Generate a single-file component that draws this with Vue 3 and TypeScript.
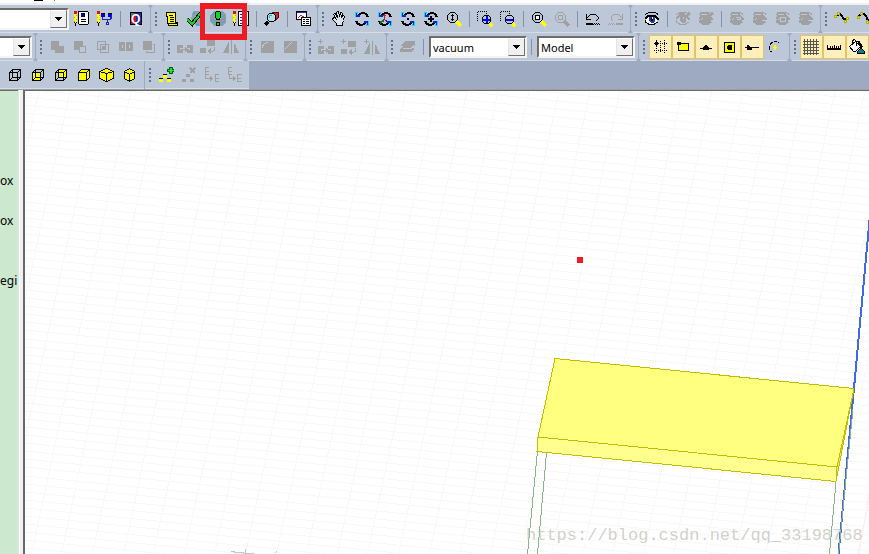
<script setup lang="ts">
type Item =
  | { kind: 'button'; icon: string; label: string; off?: boolean; on?: boolean }
  | { kind: 'sep' }
  | { kind: 'combo'; value: string; label: string; size: string }

interface Bar {
  items: Item[]
  grip: boolean
}

const fill = (color: string, d: string): string => `<path fill="${color}" d="${d}"/>`
const line = (color: string, d: string, w = 1): string =>
  `<path fill="none" stroke="${color}" stroke-width="${w}" d="${d}"/>`
const dots = (color: string, d: string): string =>
  `<path fill="none" stroke="${color}" stroke-dasharray="1 1" d="${d}"/>`
const both = (color: string, stroke: string, d: string): string =>
  `<path fill="${color}" stroke="${stroke}" d="${d}"/>`
const shift = (s: string, x: number, y: number): string => `<g transform="translate(${x} ${y})">${s}</g>`

const K = '#000'
const G = '#a0a0a0'
const Y = '#ff0'
const BG = '#bcc7d8'

const pencil =
  fill('#e01010', 'M0 0h3v3H0z') +
  fill(Y, 'M0 3h3v9H0z') +
  fill('#e0a000', 'M2 4h1v1H2zM0 6h1v1H0zM2 8h1v1H2zM0 10h1v1H0z') +
  fill(K, 'M1 12h1v3H1zM0 11h1v1H0zM2 11h1v1H2z')

const lens = (c: string, handle: string): string =>
  line(handle, 'M10.5 10.5l4.5 4.5', 3) + line(c, 'M4.5 1.5h4l3 3v4l-3 3h-4l-3-3v-4z')

const smallLens =
  line(Y, 'M12 12l3.5 3.5', 3) + line(K, 'M7.5 4.5h4l2 2v4l-2 2h-4l-2-2v-4z')

const orbit = (centre: string): string =>
  fill('#00e0f0', 'M1 1h3v2H3v3H1zM15 15h-3v-2h1v-3h2z') +
  line(K, 'M4 4q4-3 8-1l2 3M12 12q-4 3-8 1l-2-3', 2) +
  fill('#1020d0', 'M2 2h1v2h3v2H2zM14 14h-1v-2h-3v-2h4z') +
  centre

const eye = (c: string, iris: string, white: string, pupil: string): string =>
  fill(white, 'M2 8l3-3h6l3 3-1 3-4 2H5l-3-2z') +
  line(c, 'M1.5 3.5l3-2h6l3 1v1') +
  line(c, 'M1 8l3-3h7l4 4', 2) +
  line(c, 'M1.5 9v2l3 2h6l3-2') +
  fill(iris, 'M5 6h6v4l-2 2H7l-2-2z') +
  fill(pupil, 'M7 7h2v3H7z') +
  fill(white, 'M8 6h1v2H8z')

const greyEye = (extra: string): string => eye(G, G, G, G) + fill(G, 'M2 1h9v4H2z') + line(BG, 'M3 3.5h6M3 8.5l2-1') + extra

const slash = line(G, 'M9 7l6-5', 3)

const cubeEdges = line(K, 'M2.5 13.5v-8l3-3h8v8l-3 3zM2.5 5.5h8v8M10.5 5.5l3-3')
const cube = (front: string, rear: string): string =>
  (rear ? fill(rear, 'M5 2h9v8H5z') : '') +
  (front ? fill(front, 'M2 5h9v9H2z') : '') +
  line(K, 'M5.5 2v8h8M2.5 13.5l3-3') +
  cubeEdges

const plus = line(G, 'M2.5 0v5M0 2.5h5')
const move =
  fill(G, 'M0 6h6v8H0zM10 6h6v8h-6z') + fill(BG, 'M3 9h3v2H3zM10 9h3v2h-3z') +
  line(G, 'M4 10.5h8') + fill(G, 'M8 8l3 2v1l-3 2z')
const turn = fill(G, 'M0 9h6v5H0zM7 1h8v6H7z') + line(G, 'M14.5 8v3l-2 1.5H9') + fill(G, 'M7 12l4-3v6z')
const mirror = fill(G, 'M6 2v12H0z') + both(G, G, 'M11.5 5v8.5H15z') + line(G, 'M8.5 1v14')
const tree = (x: number, y: number): string => shift(line(G, 'M1.5 0v8M1 .5h4M1 4.5h4M1 7.5h4'), x, y)
const node = (x: number, y: number): string => shift(fill(K, 'M0 0h4v1H0z') + fill(Y, 'M0 1h4v3H0z'), x, y)

const icons: Record<string, string> = {
  notes:
    pencil +
    both('#fff', K, 'M4.5 .5h9l1 1v11l-1 1h-8l-1-1z') +
    fill('#0000c8', 'M7 2h4v4H7z') + fill(K, 'M7 2h4v1H7zM10 2h1v4h-1z') +
    line(K, 'M7 8.5h5M7 10.5h5'),
  schema:
    pencil +
    fill('#0000c8', 'M4 2h4v4H4zM11 2h4v4h-4z') + fill(K, 'M4 2h4v1H4zM11 2h4v1h-4z') +
    line('#1828b0', 'M5.5 6v2.5h8V6M10.5 8v4M14.5 4v4') + line('#1828b0', 'M9.5 11.5h2v2h-2z'),
  queue:
    both('#1828b0', K, 'M2.5 1.5h11v12h-11z') + fill('#c8142c', 'M3 2h5v11H3z') + fill('#109080', 'M3 2h2v3H3z') +
    '<text x="3" y="12" font-size="12" font-weight="bold" fill="#fff" font-family="Liberation Sans, sans-serif">Q</text>',
  script:
    both(Y, K, 'M2.5 1.5h9v10h2v3h-9v-2h-1v-7h-1z') +
    line(K, 'M5 4.5h4M6 6.5h4M6 8.5h4M6 10.5h4M5 12.5h8'),
  check:
    fill('#8fa0ae', 'M6 0h6l4 4v7l-3 4H9L4 8z') + fill('#30b8c0', 'M6 1h2v2H6zM13 8h2v4h-2zM9 13h3v2H9z') +
    line(K, 'M0 8l5 5L14 2', 4) + line('#00d820', 'M0 8l5 5L14 2', 2),
  alert:
    fill('#8a9aaa', 'M4 0h8l4 4v7l-4 4H4l-4-4V4z') + fill('#40b8c8', 'M3 2h2v2H3zM11 3h2v4h-2zM2 9h2v3H2zM12 12h2v1h-2z') +
    both('#00e010', K, 'M6.5 .5h3l1 1v4l-1 3h-3l-1-3v-4zM6.5 11.5h3v3h-3z'),
  report: pencil + both('#fff', K, 'M5.5 .5h10v14h-10z') + line('#1020c0', 'M7 3.5h7M7 6.5h7M7 9.5h7M7 12.5h7'),
  inspect:
    both('#b83030', '#700018', 'M8.5 1.5h6v5l-3 3z') +
    line(K, 'M4 11l-3 3', 3) +
    both('#b8e0ec', K, 'M5.5 2.5h4l2 2v4l-2 2h-4l-2-2v-4z') +
    line('#00c8e0', 'M5.5 7V5l2-1'),
  copywin:
    both('#fff', K, 'M1.5 .5h10v8h-10z') + fill('#1828b0', 'M2 1h9v1H2z') + line('#c02020', 'M3 7l3-3 4 3') +
    both('#fff', K, 'M6.5 6.5h9v8h-9z') + line(K, 'M8 8.5h2M11 8.5h3M8 10.5h2M11 10.5h3M8 12.5h2M11 12.5h3'),
  hand:
    both('#dce4ee', K, 'M5.5 14.5v-2l-4-4v-1l2-1 2 2-3-5 1-1h1l2 4-1-5 1-1h1l1 5 1-4h1l1 1-1 4 2-2 1 1-1 4-1 3v2z'),
  orbit: orbit(''),
  orbitAxis: orbit(line('#e01020', 'M7.5 3v6M6 4.5h3', 1) + line('#008020', 'M7 9l-4 3', 2) + line('#1020c0', 'M8 9l4 3')),
  orbitDot: orbit(fill(K, 'M7 7h2v2H7z')),
  orbitPlus: orbit(fill(K, 'M7 5h2v2h2v2H9v2H7V9H5V7h2z')),
  zoomDrag: lens(K, Y) + fill(K, 'M6 3h1v1h1v1H7v3h1v1H7v1H6V9H5V8h1V5H5V4h1z'),
  zoomIn: dots(K, 'M.5 10V.5h9v4') + smallLens + fill('#0000f0', 'M9 5h2v3h2v2h-2v2H9v-2H6V8h3z'),
  zoomOut: dots(K, 'M.5 10V.5h9v4') + smallLens + fill('#0000f0', 'M6 8h7v2H6z'),
  fit: lens(K, Y) + both('#fff', K, 'M4.5 4.5h4v4h-4z'),
  fitSel: lens(G, G) + line(G, 'M4.5 4.5h4v4h-4z'),
  undo: line(K, 'M1.5 3v5H6M2 7l4-4h4l3 3v2l-2 2') + line(K, 'M1 13h7', 2) + dots(K, 'M9 12.5h6M8 13.5h8'),
  redo: line(G, 'M14.5 3v5H10M14 7l-4-4H6L3 6v2l2 2') + line(G, 'M8 13h7', 2) + dots(G, 'M1 12.5h6M0 13.5h8'),
  eye: eye(K, '#2838a8', '#fff', K),
  eyeCross: eye(G, G, BG, G) + fill(G, 'M4 1h6v3H4z') + line(BG, 'M9 5l5 5') + slash,
  eyeCrossB: greyEye(slash),
  eyeA: greyEye(line(BG, 'M7 6.5h4v2H8')),
  eyeB: greyEye(line(BG, 'M10 9.5h3')),
  eyeC: greyEye(line(BG, 'M5.5 6.5h5v4h-5z')),
  spanLine: line(K, 'M2 5l4-2 5 6 3-2', 2) + both(Y, '#b0b000', 'M.5 4.5h2v2h-2zM3.5 1.5h2v2h-2zM10.5 9.5h2v2h-2zM12.5 6.5h2v2h-2z'),
  spanCurve: line(K, 'M1 6l4-4q5 2 5 6l5 3', 2) + both(Y, '#b0b000', 'M.5 5.5h2v2h-2zM3.5 1.5h2v2h-2zM9.5 10.5h2v2h-2z'),
  unite: fill(G, 'M2 2h8v5h5v7H6v-3H2z'),
  subtract: fill(G, 'M2 2h9v9H2z') + both(BG, G, 'M7.5 7.5h6v6h-6z'),
  intersect: line(G, 'M2.5 2.5h8v8h-8zM5.5 5.5h8v8h-8z') + fill(G, 'M7 7h3v3H7z'),
  split: fill(G, 'M1 3h6v9H1zM8 3h7v9H8z') + fill(BG, 'M4 6h1v3H4zM11 6h1v3h-1z'),
  imprint: fill(G, 'M2 2h9v9H2z') + line(G, 'M12 5.5h1.5v8H5.5V12'),
  move,
  turn,
  mirror,
  moveCopy: plus + shift(move, 0, 1),
  turnCopy: plus + shift(turn, 0, 1),
  mirrorCopy: plus + shift(mirror, 0, 1),
  fillet: fill(G, 'M2 2h13v12H2z') + line(BG, 'M3.5 9q0-5 6-5.5'),
  chamfer: fill(G, 'M2 2h13v12H2z') + line(BG, 'M3 10l7-7'),
  sheet: fill(G, 'M5 2h10v4l-3 3h2v1l-3 3H0v-3l3-3H1V6z') + line(BG, 'M3 9.5h8l3-3'),
  snapGrid:
    dots(K, 'M4.5 7v7M12.5 1v14M6 4.5h9M2 11.5h13M8.5 2v12') +
    fill(K, 'M3 3h1V1h1v2h1v1h1v1H6v1H5v1H4V6H3V5H2V4h1z'),
  snapVertex: both(Y, K, 'M3.5 4.5h10v7h-10z') + fill(K, 'M2 3h4v3H2z'),
  snapEdge: line(K, 'M2 9.5h12') + fill(K, 'M7 6h2v1h1v1h1v3H5V8h1V7h1z'),
  snapFace: both(Y, K, 'M3.5 3.5h10v10h-10z') + fill(K, 'M7 6h3l1 1v3l-1 1H7l-1-1V7z'),
  snapQuad: line(K, 'M1 8.5h14') + fill(K, 'M3 6h1l3 2h1v3H3z'),
  snapArc: line(K, 'M4.5 13l-1-1M2.5 11V7M3.5 6V5l2-2M7 2.5h3M11 3.5h1') + fill(Y, 'M7 6h2v2h1v1H9v2H7V9H6V8h1z'),
  grid: line('#56554a', 'M0 2.5h16M0 5.5h16M0 8.5h16M0 11.5h16M0 14.5h16M1.5 0v16M4.5 0v16M7.5 0v16M10.5 0v16M13.5 0v16'),
  ruler: line(K, 'M1 10h14', 2) + line(K, 'M1.5 6v4M4.5 7v3M6.5 7v3M8.5 6v4M10.5 7v3M12.5 7v3M14.5 6v4'),
  bucket:
    both('#fff', K, 'M.5 7.5l6-5 5 5-5 5h-2z') + line(K, 'M3.5 5V1.5l2-1 2 2v4') + line(K, 'M9 2l4 6', 2) +
    both('#108088', K, 'M8.5 14.5v-2l3-3v-2h1v2l3 3v2z'),
  cubeWire: cube('', ''),
  cubeFront: cube(Y, ''),
  cubeRear: cube('', Y),
  cubeSolid: fill(Y, 'M2 6l3-4h9v8l-3 4H2z') + cubeEdges,
  cubeWide: both(Y, K, 'M.5 4.5l7-3 7 3v7l-7 3-7-3z') + line(K, 'M.5 4.5l7 2 7-2M7.5 6.5v8'),
  cubeTall: both(Y, K, 'M2.5 4.5l5-3 5 3v7l-5 3-5-3z') + line(K, 'M2.5 4.5l5 3 5-3M7.5 7.5v7'),
  csAdd: node(5, 7) + node(1, 11) + node(9, 11) + fill('#006010', 'M11 0h4v2h2v3h-2v2h-4V5H9V2h2z') + fill('#20e040', 'M12 1h2v2h2v1h-2v2h-2V4h-2V3h2z'),
  csDel: fill(G, 'M5 7h4v3H5zM1 12h4v3H1zM9 12h4v3H9z') + line(G, 'M9 1l5 5M14 1L9 6', 2),
  csMove: tree(0, 0) + tree(10, 7) + line(G, 'M1.5 7v4.5H7') + fill(G, 'M6 9l3 2v1l-3 2z'),
  csLink: tree(0, 0) + line(G, 'M2 8v3.5h5M15 7.5h-4l-1 1v5l1 1h4M10 11.5h4') + fill(G, 'M6 9l3 2v1l-3 2z')
}

const b = (icon: string, label: string): Item => ({ kind: 'button', icon, label })
const off = (icon: string, label: string): Item => ({ kind: 'button', icon, label, off: true })
const on = (icon: string, label: string): Item => ({ kind: 'button', icon, label, on: true })
const sep: Item = { kind: 'sep' }

const rows: Bar[][] = [
  [
    { grip: false, items: [{ kind: 'combo', value: '', label: 'Design', size: 'medium' }, b('notes', 'Notes'), b('schema', 'Schema'), sep, b('queue', 'Queue')] },
    { grip: true, items: [b('script', 'Script'), b('check', 'Validate'), b('alert', 'Analyze all'), b('report', 'Report'), sep, b('inspect', 'Inspect'), sep, b('copywin', 'Copy image')] },
    {
      grip: true,
      items: [
        b('hand', 'Pan'), b('orbit', 'Rotate'), b('orbitAxis', 'Rotate about axis'), b('orbitDot', 'Rotate about centre'), b('orbitPlus', 'Spin'), b('zoomDrag', 'Zoom'), sep,
        b('zoomIn', 'Zoom in'), b('zoomOut', 'Zoom out'), sep, b('fit', 'Fit all'), off('fitSel', 'Fit selection'), sep, b('undo', 'Undo'), off('redo', 'Redo')
      ]
    },
    {
      grip: true,
      items: [
        b('eye', 'Visibility'), sep, off('eyeCross', 'Hide selection'), off('eyeCrossB', 'Hide in view'), sep,
        off('eyeA', 'Show all'), off('eyeB', 'Show selection'), off('eyeC', 'Show in view'), off('eyeB', 'Show active')
      ]
    },
    { grip: true, items: [b('spanLine', 'Line'), b('spanCurve', 'Spline')] }
  ],
  [
    { grip: false, items: [{ kind: 'combo', value: '', label: 'Plane', size: 'small' }] },
    { grip: true, items: [off('unite', 'Unite'), off('subtract', 'Subtract'), off('intersect', 'Intersect'), off('split', 'Split'), off('imprint', 'Imprint')] },
    { grip: true, items: [off('move', 'Move'), off('turn', 'Rotate'), off('mirror', 'Mirror')] },
    { grip: true, items: [off('fillet', 'Fillet'), off('chamfer', 'Chamfer')] },
    { grip: true, items: [off('moveCopy', 'Duplicate along line'), off('turnCopy', 'Duplicate around axis'), off('mirrorCopy', 'Duplicate mirror')] },
    {
      grip: true,
      items: [off('sheet', 'Sheet'), sep, { kind: 'combo', value: 'vacuum', label: 'Material', size: 'large' }, sep, { kind: 'combo', value: 'Model', label: 'Object type', size: 'large' }]
    },
    { grip: true, items: [on('snapGrid', 'Snap grid'), on('snapVertex', 'Snap vertex'), on('snapEdge', 'Snap edge'), on('snapFace', 'Snap face'), on('snapQuad', 'Snap quadrant'), b('snapArc', 'Snap arc')] },
    { grip: true, items: [on('grid', 'Grid'), on('ruler', 'Ruler'), on('bucket', 'Shading')] }
  ],
  [
    { grip: false, items: [b('cubeWire', 'Wireframe'), b('cubeFront', 'Front'), b('cubeRear', 'Rear'), b('cubeSolid', 'Solid'), b('cubeWide', 'Isometric'), b('cubeTall', 'Trimetric')] },
    { grip: true, items: [b('csAdd', 'Add coordinate system'), off('csDel', 'Delete'), off('csMove', 'Move'), off('csLink', 'Link')] }
  ]
]

const steep = Array.from({ length: 32 }, (_, i) => {
  const x = 14 + Math.round(i * 30.6)
  return `M${x} 0L${x - 100} 465`
}).join('')

const shallow = Array.from({ length: 70 }, (_, i) => {
  const y = -91 + Math.round(i * 8.06)
  return `M0 ${y}L844 ${y + 84}`
}).join('')
</script>

<template>
  <div class="app">
    <header class="chrome">
      <div class="menu-strip">
        <svg width="60" height="1" shape-rendering="crispEdges" aria-hidden="true">
          <path d="M34 0h9v1h-9z" fill="#000" /><path d="M54 0h1v1h-1z" fill="#c06010" />
        </svg>
      </div>
      <div v-for="(row, r) in rows" :key="r" class="row" :class="{ short: r === 2 }">
        <div v-for="(bar, t) in row" :key="t" class="bar" role="toolbar">
          <span v-if="bar.grip" class="grip"></span>
          <template v-for="(item, n) in bar.items" :key="n">
            <span v-if="item.kind === 'sep'" class="sep"></span>
            <label v-else-if="item.kind === 'combo'" class="combo" :class="item.size">
              <select :aria-label="item.label">
                <option>{{ item.value }}</option>
              </select>
              <span class="arrow">
                <svg width="7" height="4" viewBox="0 0 7 4" shape-rendering="crispEdges"><path d="M0 0h7v1H6v1H5v1H4v1H3V3H2V2H1V1H0z" /></svg>
              </span>
            </label>
            <button v-else type="button" class="tool" :class="{ on: item.on }" :disabled="item.off" :aria-label="item.label" :aria-pressed="item.on">
              <svg width="16" height="16" viewBox="0 0 16 16" shape-rendering="crispEdges" aria-hidden="true" v-html="icons[item.icon]"></svg>
            </button>
          </template>
          <span class="edge"></span>
        </div>
      </div>
      <span class="highlight"></span>
    </header>

    <main class="workspace">
      <aside class="tree">
        <ul>
          <li>ox</li>
          <li></li>
          <li>ox</li>
          <li></li>
          <li></li>
          <li>egi</li>
        </ul>
      </aside>
      <div class="splitter"></div>
      <section class="view">
        <svg class="scene" viewBox="0 0 844 463" preserveAspectRatio="xMinYMin slice">
          <g fill="none" stroke="#f8f8f8" shape-rendering="crispEdges">
            <path :d="steep" />
            <path :d="shallow" />
          </g>
          <path d="M844 404L834 463" stroke="#fdeaea" />
          <g fill="none" shape-rendering="crispEdges">
            <path d="M206 460.5h3v1h9v1h11M220.5 458v4M250 462l2-2" stroke="#c4c0dc" />
            <path d="M844.5 129L829 297L813.5 463" stroke="#4169e1" stroke-width="2" />
            <path d="M512.5 360L502.5 463M521.5 362L512.5 463M811 391L804.5 463M828 318L813.5 463" stroke="#8fb08f" />
            <g stroke="#bfbf00">
              <path d="M530 267.5L829 297.5L812 376L513 346z" fill="#ffff80" />
              <path d="M513 346L812 376L811 390.5L512 360.5z" fill="#ffff90" />
              <path d="M829 297.5L812 376L811 390.5z" fill="#e8e878" />
            </g>
          </g>
          <path d="M552 166h6v6h-6z" fill="#ed1c24" />
          <text class="mark" x="501" y="449">https://blog.csdn.net/qq_33198768</text>
        </svg>
      </section>
    </main>
  </div>
</template>

<style>
html,
body,
#app {
  height: 100%;
}
body {
  margin: 0;
  overflow: hidden;
}
</style>

<style scoped>
.app {
  display: flex;
  flex-direction: column;
  height: 100%;
  overflow: hidden;
  font-family: "Noto Sans", "Open Sans", sans-serif;
  font-size: 12px;
  color: #000;
}
.chrome {
  position: relative;
  flex: none;
  background: #9daac1;
}
.menu-strip {
  height: 5px;
  background: linear-gradient(#fff 3px, #f0f0f0 3px);
}
.menu-strip svg {
  display: block;
}
.row {
  display: flex;
  height: 28px;
  overflow: hidden;
  background: #bcc7d8;
  box-shadow: inset 0 -1px #d5dce8;
}
.row.short {
  width: max-content;
  padding-left: 4px;
}
.bar {
  display: flex;
  flex: none;
  align-items: center;
}
.grip {
  width: 8px;
  height: 14px;
  background: repeating-linear-gradient(#60708e 0 2px, transparent 2px 4px) 2px 0 / 2px 14px no-repeat;
}
.sep {
  width: 8px;
  height: 16px;
  background: linear-gradient(#8492a9, #8492a9) 3px 0 / 1px 100% no-repeat;
}
.edge {
  align-self: stretch;
  width: 5px;
  background: #9daac1;
  clip-path: polygon(0 0, 100% 0, 3px 3px, 3px 25px, 100% 100%, 0 100%, 2px 25px, 2px 3px);
}
.short .edge {
  clip-path: polygon(2px 0, 3px 0, 3px 100%, 2px 100%);
}
.short .bar:last-child .edge {
  width: 2px;
  visibility: hidden;
}
.tool {
  display: flex;
  align-items: center;
  justify-content: center;
  box-sizing: border-box;
  width: 23px;
  height: 24px;
  padding: 0 1px 0 0;
  border: 1px solid transparent;
  background: none;
}
.tool svg {
  flex: none;
}
.tool.on {
  border-color: #e5c365;
  background: #ffefbd;
}
.combo {
  position: relative;
  box-sizing: border-box;
  height: 22px;
  margin: 0 1px;
  border: 2px solid;
  border-color: #6d6d6d #f4f4f4 #f4f4f4 #6d6d6d;
  background: #fff;
}
.combo.medium {
  width: 69px;
  margin: 0 2px 0 0;
  border-left: 0;
}
.combo.small {
  width: 32px;
  border-left: 0;
  margin: 0 1px 0 0;
}
.combo.large {
  width: 98px;
}
.combo select {
  display: block;
  width: 100%;
  height: 100%;
  padding: 0 18px 0 2px;
  border: 0;
  border-radius: 0;
  appearance: none;
  background: transparent;
  color: #000;
  font: 11px "Noto Sans", "Open Sans", sans-serif;
}
.combo.small select {
  padding: 0;
}
.arrow {
  position: absolute;
  top: 0;
  right: 0;
  bottom: 0;
  box-sizing: border-box;
  display: grid;
  place-items: center;
  width: 17px;
  border: 1px solid;
  border-color: #fff #707070 #707070 #e4e4e4;
  background: #f0f0f0;
  pointer-events: none;
}
.highlight {
  position: absolute;
  top: 3px;
  left: 200px;
  box-sizing: border-box;
  width: 47px;
  height: 37px;
  border: 5px solid #ed1c24;
  border-width: 6px 5px;
  pointer-events: none;
}
.workspace {
  display: flex;
  flex: 1;
  min-height: 0;
  border-top: 1px solid #a0a0a0;
}
.tree {
  width: 18px;
  overflow: hidden;
  border-top: 1px solid #696969;
  background: #cce8cf;
}
.tree ul {
  margin: 0;
  padding: 80px 0 0;
  list-style: none;
}
.tree li {
  height: 20px;
  line-height: 20px;
}
.splitter {
  width: 5px;
  background: linear-gradient(90deg, #e3e3e3 1px, #fff 1px 2px, #f0f0f0 2px);
}
.view {
  flex: 1;
  min-width: 0;
  border-top: 1px solid #696969;
  border-left: 2px solid #696969;
  background: #fff;
  overflow: hidden;
}
.scene {
  display: block;
  width: 100%;
  height: 100%;
}
.mark {
  font: 17px "Liberation Mono", monospace;
  fill: #b8b8b0;
  fill-opacity: 0.65;
}
</style>
